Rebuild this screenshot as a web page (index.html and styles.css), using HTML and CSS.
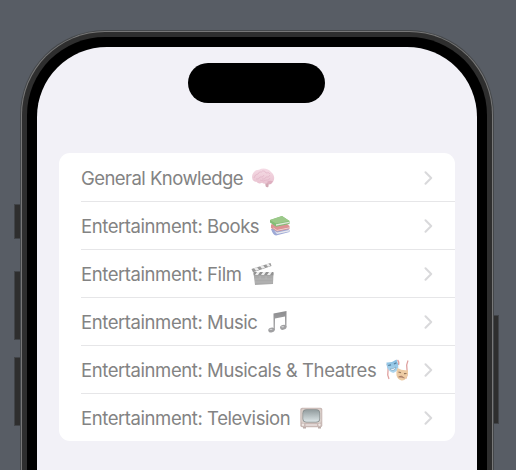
FILE: index.html
```
<!DOCTYPE html>
<html lang="en">
<head>
<meta charset="utf-8">
<title>Categories</title>
<link rel="stylesheet" href="styles.css">
</head>
<body>
<svg width="0" height="0" class="defs">
  <defs>
    <linearGradient id="pink" x2="0" y2="1"><stop stop-color="#f5dbe5"/><stop offset="1" stop-color="#e9c2d0"/></linearGradient>
    <linearGradient id="grey" x2="0" y2="1"><stop stop-color="#8c8c8e"/><stop offset="1" stop-color="#b2b2b4"/></linearGradient>
    <linearGradient id="glass" x2="0" y2="1"><stop stop-color="#939d9f"/><stop offset="1" stop-color="#dce5e7"/></linearGradient>
    <linearGradient id="blue" x2="0" y2="1"><stop stop-color="#83bce0"/><stop offset="1" stop-color="#b5d9ef"/></linearGradient>
    <symbol id="chevron" viewBox="0 0 9 14"><path d="M1.500 1.300 7.200 7l-5.700 5.700" fill="none" stroke="#d9d9db" stroke-width="2" stroke-linecap="round" stroke-linejoin="round"/></symbol>
  </defs>
</svg>
<div class="button mute"></div>
<div class="button up"></div>
<div class="button down"></div>
<div class="button power"></div>
<main class="phone">
  <div class="bezel">
    <div class="screen">
      <div class="island"></div>
      <ul class="list">
        <li><span class="label general">General Knowledge</span>
          <svg class="icon" viewBox="0 0 24 24"><path d="M14 15.500q2 .5 4 1.500l-.7 4q-1.800.8-2.700-.8z" fill="#d1a8b3"/><path d="M1.300 12.500C0 8 4 3.500 8 3.800 12 1.300 18 3 20 6c3 2 4 6 2.500 9-1 2-3 2.500-5 1.800-2 1.200-5 1.200-6.500 0-2 1-4 .8-5.500-1-2 0-4-1-4.200-3.300z" fill="url(#pink)"/><path d="M3 12q1-4 4-4 1-3 4-2m-6 7q3 1 4-2 3 1 4-2m-2-4q3-1 4 2 3-1 4 1m-8 5q3 1 4-2 3 1 4-2m-10 5q4 2 6 0 3 1 4-2" fill="none" stroke="#dfafc3" stroke-width=".6"/><path d="M16 16q3-2 6-.5-1 2.500-4 3z" fill="#deafc0"/></svg>
          <svg class="chevron"><use href="#chevron"/></svg></li>
        <li><span class="label">Entertainment: Books</span>
          <svg class="icon book-stack" viewBox="0 0 24 24"><path d="m3 16 14-2.500 4.500 3.500v2L8 22.500q-3-.5-5-6.500z" fill="#9da9d6"/><path d="m6 17.500 3 2 12-2.500v1.500L9 21z" fill="#e7e7ed"/><path d="M3 11.500 16 8.500l5.500 4.500v3L9 18.500 3 15z" fill="#dc9394"/><path d="m5 14.500 4 2.500 12-2.500v.8L9 17.700 5 15z" fill="#eee1e1"/><path d="m2 7 12-4 7.500 5v3L8 13.700 2 9.500z" fill="#83bd75"/><path d="m2 7 12-4 7.500 5L8 10.500z" fill="#9cc98a"/><path d="m8 11.300 13-2.500V10L8 12.700z" fill="#e0eadb"/></svg>
          <svg class="chevron"><use href="#chevron"/></svg></li>
        <li><span class="label">Entertainment: Film</span>
          <svg class="icon" viewBox="0 0 24 24"><path d="M3.500 11h20l-.5 11-18 1z" fill="#aaa"/><path d="M3.500 10h20l-.2 3.300H3.800z" fill="#929292"/><path d="m5 13 2-3h3l-2 3zm6 0 2-3h3l-2 3zm6 0 2-3h3l-2 3z" fill="#eee"/><path d="M1.500 7 20.500 1l1 3L3 10.300z" fill="#999"/><path d="m4 6.200 3-.9 2 2.400-3 1zm6-1.900 3-1 2 2.400-3 1zm6-1.900 2.500-.8 2 2.500-2.500.7z" fill="#ececec"/><path d="M5 17h17.500M10 14v3m6-3v3M5 20h17.500" stroke="#bcbcbc" stroke-width=".7"/></svg>
          <svg class="chevron"><use href="#chevron"/></svg></li>
        <li><span class="label">Entertainment: Music</span>
          <svg class="icon" viewBox="0 0 24 24"><path d="M7.500 3.500 20.500 1v16h-1.500V6.500L9 8.400V20H7.500z" fill="url(#grey)"/><ellipse cx="5.500" cy="20" rx="3.300" ry="2.400" transform="rotate(-18 5.500 20)" fill="#a0a0a2"/><ellipse cx="17.300" cy="17.300" rx="3.300" ry="2.400" transform="rotate(-18 17.300 17.300)" fill="#a0a0a2"/><ellipse cx="5" cy="19.400" rx="1.500" ry=".7" fill="#d0d0d2"/><ellipse cx="16.700" cy="16.700" rx="1.500" ry=".7" fill="#d0d0d2"/></svg>
          <svg class="chevron"><use href="#chevron"/></svg></li>
        <li><span class="label">Entertainment: Musicals &amp; Theatres</span>
          <svg class="icon" viewBox="0 0 24 24"><path d="M2 6q2 3 1 7t1 8M23 2.500q-2 4-1 9t-1 9M12.500 2q2 2 1 5" fill="none" stroke="#dfa1a0" stroke-width="1.300"/><path d="M1.500 4.500Q7 5 11.500 1.500q2 4 1.800 8-.8 4-5 5.500-4-1-6-5-1-3-.8-5.500z" fill="url(#blue)"/><path d="m3.200 7.500 2.800-.7m3-.8 2.500-1.200" stroke="#547c9b" stroke-width="1.200"/><path d="M5 11q3.500 0 6-2-.5 3-3 3.500-1.700 0-3-1.500z" fill="#fff" stroke="#719ab8" stroke-width=".6"/><path d="M12.500 10q5 3 10.500 2 .5 5-1.500 8-2.500 3-5 2.500-4-1-5-5-.5-4 1-7.500z" fill="#edcba3"/><path d="m13.500 14 2.500.8m3 .8 2.500-.1" stroke="#94765d" stroke-width="1.200"/><path d="M13.500 19q2.500-2.500 6 1-3-.8-6-1z" fill="#a77b66" stroke="#a77b66" stroke-width=".5"/></svg>
          <svg class="chevron"><use href="#chevron"/></svg></li>
        <li><span class="label">Entertainment: Television</span>
          <svg class="icon" viewBox="0 0 24 24"><path d="M4 20h3v2.500H4zm15 0h3v2.500h-3z" fill="#b8aaa6"/><rect x="1.300" y="1.800" width="22" height="19.500" rx="1.800" fill="#c9b9b5"/><rect x="2.300" y="2.800" width="20" height="14.200" rx="2" fill="#dbd0cb"/><rect x="3.500" y="3.300" width="17.600" height="13.200" rx="4" fill="#858c8d"/><rect x="4.200" y="4" width="16.200" height="11.800" rx="3.500" fill="url(#glass)"/><path d="M6.500 19H18" stroke="#e4dad7" stroke-width="1.800"/><circle cx="4" cy="18.800" r="1.200" fill="#eee7e4"/><circle cx="20.500" cy="18.800" r="1.200" fill="#eee7e4"/></svg>
          <svg class="chevron"><use href="#chevron"/></svg></li>
      </ul>
    </div>
  </div>
</main>
</body>
</html>
```

FILE: styles.css
```
* { box-sizing: border-box; }
body {
  margin: 0;
  height: 470px;
  overflow: hidden;
  position: relative;
  padding: 30px 0 0 20px;
  background: #585d65;
  font-family: Inter, "Liberation Sans", sans-serif;
}
.defs { position: absolute; }
.phone {
  position: relative;
  width: 474px;
  height: 440px;
  border: 1px solid #44474a;
  border-bottom: 0;
  border-radius: 85px 85px 0 0;
  background: #777;
  padding: 1px 1px 0;
}
.bezel {
  height: 100%;
  border: 5px solid #2e2e2e;
  border-bottom: 0;
  border-radius: 83px 83px 0 0;
  background: #000;
  padding: 10px 10px 0;
}
.screen {
  height: 100%;
  border-radius: 70px 70px 0 0;
  background: #f2f1f7;
  padding: 15.5px 22px 0;
}
.island {
  width: 137px;
  height: 40px;
  margin: 0 0 50.5px 129.300px;
  border-radius: 20px;
  background: #000;
}
.list {
  margin: 0;
  padding: 0 0 0 22px;
  list-style: none;
  background: #fff;
  border-radius: 11px;
}
.list li {
  display: flex;
  align-items: center;
  height: 48px;
  padding: 2px 22px 0 0;
}
.list li + li { box-shadow: inset 0 1px #e6e6e8; }
.label {
  font-size: 18.5px;
  line-height: 24px;
  letter-spacing: -0.42px;
  white-space: nowrap;
  color: #838383;
}
.general { letter-spacing: -0.55px; }
.icon { width: 24px; height: 24px; margin-left: 8.500px; flex: none; }
.book-stack { margin-top: -2px; }
.chevron { width: 9px; height: 14px; margin-left: auto; margin-top: -1px; flex: none; }
.button {
  position: absolute;
  left: 14px;
  width: 8px;
  background: #2e2e2e;
  border: 1px solid #414448;
}
.mute { top: 204px; height: 35px; }
.up { top: 271px; height: 69px; }
.down { top: 357px; height: 69px; }
.power { left: 492px; top: 315px; height: 109px; width: 7px; }
```
